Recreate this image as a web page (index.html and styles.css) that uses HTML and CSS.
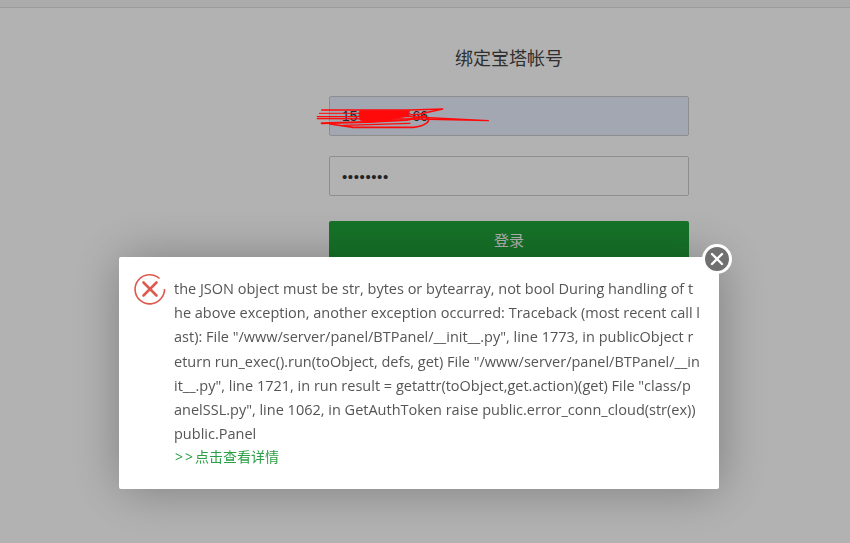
FILE: index.html
```html
<!DOCTYPE html>
<html lang="zh-CN">
<head>
<meta charset="utf-8">
<title>绑定宝塔帐号</title>
<link rel="stylesheet" href="styles.css">
</head>
<body>
<header class="topbar"></header>
<main class="bind">
  <h1 class="bind-title">绑定宝塔帐号</h1>
  <div class="field field-auto">
    <span class="field-text">15<span class="field-mask">*******</span>66</span>
    <svg class="scribble" width="190" height="50" viewBox="0 0 570 150" fill="none" stroke="#ff0a0a" stroke-linecap="round" stroke-linejoin="round">
      <path d="M35 60H300L398 57L330 72L250 80" stroke-width="4"/>
      <path d="M28 70H300" stroke-width="3"/>
      <path d="M22 80H300L535 92L320 87L22 86" stroke-width="4"/>
      <path d="M35 100L170 96L290 90L345 78" stroke-width="6"/>
      <path d="M60 102L130 112H310C345 108 360 95 355 85" stroke-width="5"/>
      <path d="M100 106L300 100" stroke-width="4"/>
      <path d="M150 62H300L285 80L230 92L170 98L150 90Z" fill="#ff0a0a" stroke-width="2"/>
    </svg>
  </div>
  <div class="field"><span class="field-dots">••••••••</span></div>
  <button class="submit" type="button">登录</button>
</main>
<div class="overlay"></div>
<section class="dialog">
  <svg class="err-icon" width="32" height="32" viewBox="0 0 32 32" fill="none" stroke="#dc5a4e">
    <path d="M25.5 5.5A14.6 14.6 0 1 0 27 25.5A14.6 14.6 0 0 0 30.6 16" stroke-width="1.6"/>
    <path d="M9.5 9.5L22.5 22.5M22.5 9.5L9.5 22.5" stroke-width="2.6" stroke-linecap="round"/>
  </svg>
  <div class="dialog-body">
    <p class="dialog-msg">the JSON object must be str, bytes or bytearray, not bool During handling of t<br>he above exception, another exception occurred: Traceback (most recent call l<br>ast): File "/www/server/panel/BTPanel/__init__.py", line 1773, in publicObject r<br>eturn run_exec().run(toObject, defs, get) File "/www/server/panel/BTPanel/__in<br>it__.py", line 1721, in run result = getattr(toObject,get.action)(get) File "class/p<br>anelSSL.py", line 1062, in GetAuthToken raise public.error_conn_cloud(str(ex))<br>public.Panel</p>
    <a class="dialog-link" href="#"><span class="dialog-arrows">&gt;&gt;</span>点击查看详情</a>
  </div>
  <button class="close" type="button" aria-label="关闭">
    <svg width="14" height="14" viewBox="0 0 14 14" stroke="#fff" stroke-width="2.4" stroke-linecap="round"><path d="M2 2L12 12M12 2L2 12"/></svg>
  </button>
</section>
</body>
</html>
```

FILE: styles.css
```css
* { box-sizing: border-box; }
html, body { height: 100%; }
body {
  margin: 0;
  overflow: hidden;
  background: #fff;
  color: #333;
  font-family: "Open Sans", "Noto Sans CJK SC", sans-serif;
  font-size: 14px;
}
.topbar { height: 8px; border-bottom: 1px solid #ddd; background: #f5f5f5; }
.bind { width: 360px; margin-left: 329px; }
.bind-title {
  margin: 38px 0 25px;
  height: 25px;
  font-size: 18px;
  line-height: 25px;
  font-weight: 400;
  text-align: center;
  color: #444;
}
.field {
  position: relative;
  display: flex;
  align-items: center;
  height: 40px;
  margin-bottom: 20px;
  padding: 0 12px;
  border: 1px solid #ccc;
  border-radius: 2px;
  background: #fff;
  font-family: "Liberation Sans", sans-serif;
  font-size: 14px;
}
.field-auto { background: #e8f0fe; }
.field-mask { letter-spacing: 2.4px; }
.field-dots { letter-spacing: 0.6px; font-size: 15px; }
.scribble { position: absolute; left: -20px; top: -7px; z-index: 2; }
.submit {
  display: block;
  width: 100%;
  height: 44px;
  margin-top: 25px;
  border: 0;
  border-radius: 2px;
  background: #20a53a;
  color: #fff;
  font: inherit;
  font-size: 15px;
  padding-bottom: 8px;
}
.overlay { position: fixed; inset: 0; background: rgba(0, 0, 0, 0.3); }
.dialog {
  position: fixed;
  z-index: 3;
  left: 119px;
  top: 257px;
  display: flex;
  width: 600px;
  height: 232px;
  padding: 16px 24px 0 14px;
  border-radius: 2px;
  background: #fff;
  box-shadow: 1px 1px 50px rgba(0, 0, 0, 0.3);
}
.err-icon { flex: none; margin: 0 8px 0 1px; }
.dialog-body { width: 522px; }
.dialog-msg {
  margin: 4px 0 0;
  font-size: 14.5px;
  line-height: 24.17px;
  white-space: nowrap;
  color: #555;
}
.dialog-link {
  display: block;
  margin-top: -1px;
  font-size: 14px;
  line-height: 24px;
  color: #2a9f45;
  text-decoration: none;
}
.dialog-arrows { letter-spacing: 2px; margin-left: 1px; }
.close {
  position: absolute;
  right: -13px;
  top: -13px;
  display: flex;
  align-items: center;
  justify-content: center;
  width: 30px;
  height: 30px;
  padding: 0;
  border: 3px solid #fff;
  border-radius: 50%;
  background: #707070;
}
```
